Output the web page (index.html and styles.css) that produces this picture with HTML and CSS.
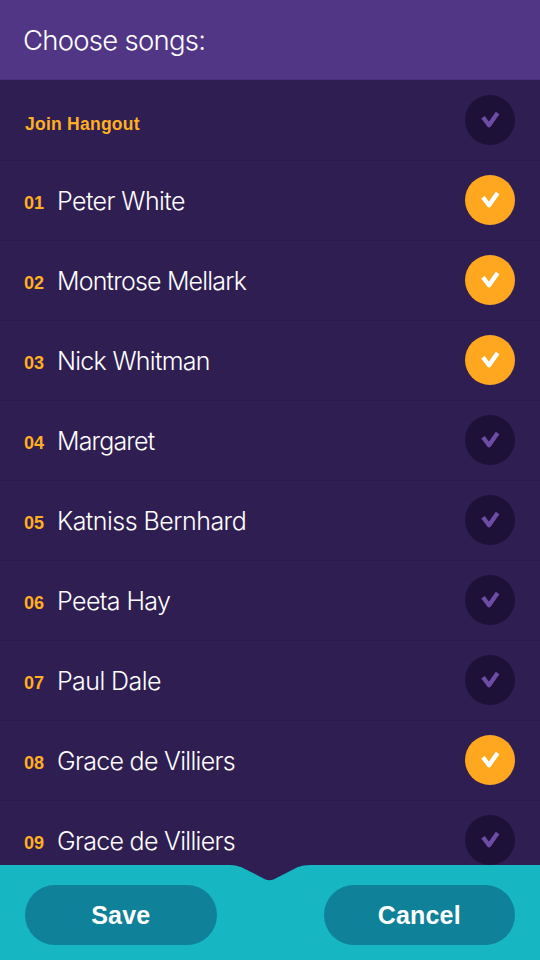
FILE: index.html
```html
<!DOCTYPE html>
<html lang="en">
<head>
<meta charset="utf-8">
<title>Choose songs</title>
<link rel="stylesheet" href="styles.css">
</head>
<body>
<svg class="defs" width="0" height="0"><symbol id="check" viewBox="0 0 50 50"><path d="M18 22.3 L24 30.2 L32.6 18"/></symbol></svg>
<div class="app">
<header class="header"><h1 class="title">Choose songs:</h1></header>
<main class="list">
<div class="row"><span class="join">Join Hangout</span><svg class="toggle"><use href="#check"/></svg></div>
<div class="row"><span class="num">01</span><span class="name">Peter White</span><svg class="toggle on"><use href="#check"/></svg></div>
<div class="row"><span class="num">02</span><span class="name montrose">Montrose Mellark</span><svg class="toggle on"><use href="#check"/></svg></div>
<div class="row"><span class="num">03</span><span class="name nick">Nick Whitman</span><svg class="toggle on"><use href="#check"/></svg></div>
<div class="row"><span class="num">04</span><span class="name margaret">Margaret</span><svg class="toggle"><use href="#check"/></svg></div>
<div class="row"><span class="num">05</span><span class="name katniss">Katniss Bernhard</span><svg class="toggle"><use href="#check"/></svg></div>
<div class="row"><span class="num">06</span><span class="name">Peeta Hay</span><svg class="toggle"><use href="#check"/></svg></div>
<div class="row"><span class="num">07</span><span class="name">Paul Dale</span><svg class="toggle"><use href="#check"/></svg></div>
<div class="row"><span class="num">08</span><span class="name grace">Grace de Villiers</span><svg class="toggle on"><use href="#check"/></svg></div>
<div class="row"><span class="num">09</span><span class="name grace">Grace de Villiers</span><svg class="toggle"><use href="#check"/></svg></div>
</main>
<footer class="footer">
<svg class="notch" viewBox="0 0 90 16"><path d="M0 0 C14 0 16 2 22 5 L40 14.2 Q44.5 16.4 49 14.2 L67 5 C73 2 75 0 90 0 Z"/></svg>
<button class="button">Save</button><button class="button">Cancel</button>
</footer>
</div>
</body>
</html>
```
FILE: styles.css
```css
* { box-sizing: border-box; }
body { margin: 0; background: #2f1e52; font-family: "Liberation Sans", Arial, sans-serif; }
.defs { position: absolute; }
.app { width: 540px; height: 960px; display: flex; flex-direction: column; overflow: hidden; }
.header { flex: 0 0 80px; padding: 0 23px; display: flex; align-items: center; background: #523686; border-bottom: 1px solid #4a307b; }
.title { margin: 0; font: 300 27.5px/34px Inter, sans-serif; letter-spacing: -0.74px; color: #fff; }
.list { flex: 0 0 785px; overflow: hidden; }
.row { height: 80px; padding: 0 25px 0 24px; display: flex; align-items: center; }
.row + .row { box-shadow: inset 0 1px #2a1a49; }
.join { padding: 8px 0 0 1px; font-weight: bold; font-size: 17.5px; line-height: 20px; color: #ffaf20; letter-spacing: 0.25px; }
.num { width: 33px; padding-top: 6px; font-weight: bold; font-size: 18px; line-height: 20px; color: #ffaf20; }
.name { font: 300 25px/30px Inter, sans-serif; color: #fff; white-space: nowrap; padding-top: 1px; letter-spacing: -0.58px; }
.montrose { letter-spacing: -0.82px; }
.nick { letter-spacing: -0.73px; }
.margaret { letter-spacing: -0.85px; }
.katniss { letter-spacing: -0.52px; }
.grace { letter-spacing: -0.7px; }
.toggle { width: 50px; height: 50px; margin-left: auto; border-radius: 50%; background: #1e1138; fill: none; stroke: #6c4ca4; stroke-width: 4.3; stroke-linejoin: round; }
.toggle.on { background: #ffa71e; stroke: #fff; }
.footer { position: relative; flex: 0 0 95px; padding: 4px 25px 0; display: flex; align-items: center; justify-content: space-between; background: #16b6c3; }
.notch { position: absolute; left: 225px; top: 0; width: 90px; height: 16px; fill: #2f1e52; }
.button { width: 191.5px; height: 60px; padding: 0; border: 0; border-radius: 30px; background: #0f8198; color: #fff; font: bold 25px/30px "Liberation Sans", Arial, sans-serif; letter-spacing: 0.2px; }
```
